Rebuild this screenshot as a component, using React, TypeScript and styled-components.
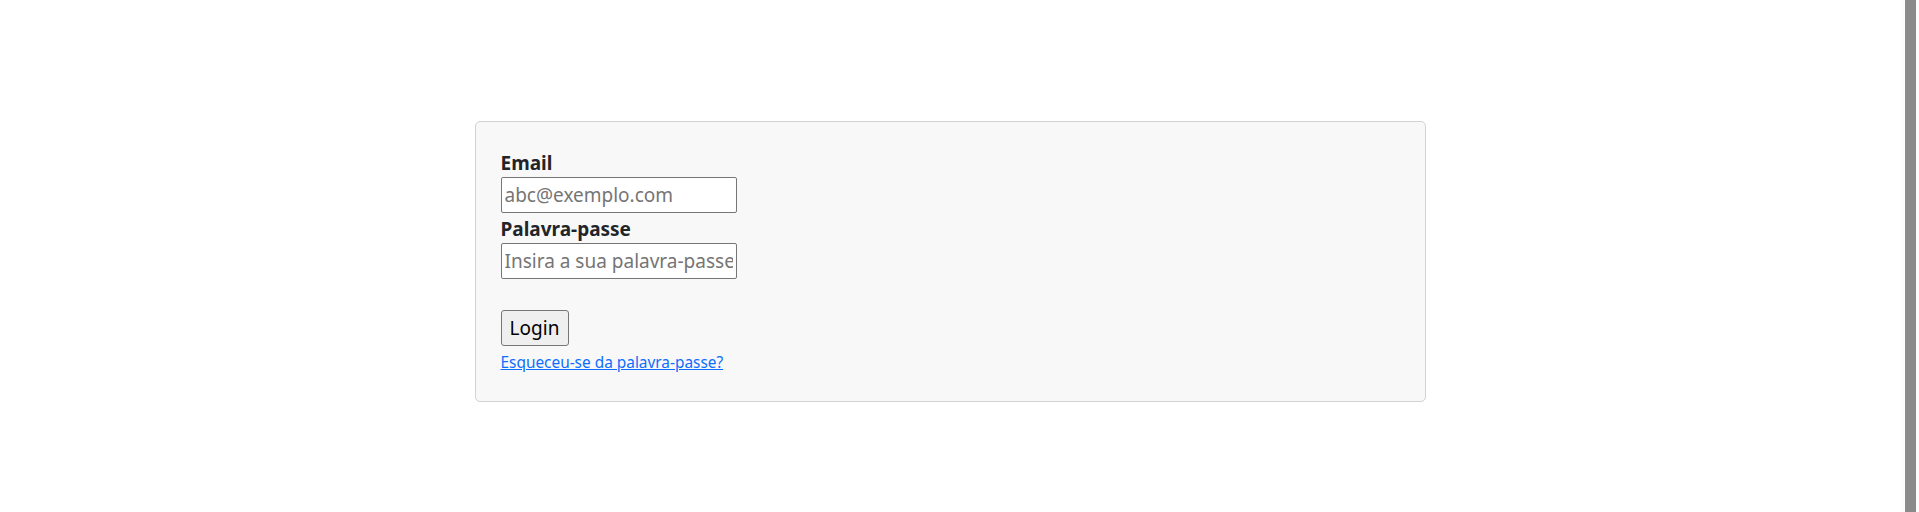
import React from "react";
import styled, { createGlobalStyle } from "styled-components";

const Global = createGlobalStyle`
  html, body { margin: 0; padding: 0; background: #ffffff; }
  body { font-family: "Noto Sans", "Open Sans", Arial, sans-serif; color: #212529; }
`;

const Page = styled.div`
  display: flex;
  justify-content: center;
  align-items: flex-start;
  padding: 121px 19px 0 0;
  min-height: 512px;
  box-sizing: border-box;
`;

const Card = styled.form`
  width: 951px;
  box-sizing: border-box;
  background: #f8f8f8;
  border: 1px solid #d2d2d2;
  border-radius: 5px;
  padding: 25px 25px 26px;
  display: flex;
  flex-direction: column;
  align-items: flex-start;
`;

const Label = styled.label`
  display: block;
  font-weight: 700;
  font-size: 19px;
  line-height: 30px;
  padding-top: 1px;
  height: 30px;
  box-sizing: border-box;
  color: #212529;
`;

const Input = styled.input`
  width: 236px;
  height: 36px;
  box-sizing: border-box;
  border: 1px solid #767676;
  border-radius: 2px;
  padding: 0 3px;
  font-family: "Noto Sans", Arial, sans-serif;
  font-size: 19px;
  color: #212529;
  background: #ffffff;
  margin: 0;
  &::placeholder { color: #757575; }
`;

const Button = styled.button`
  margin-top: 31px;
  height: 36px;
  width: 68px;
  box-sizing: border-box;
  padding: 0;
  background: #efefef;
  border: 1px solid #767676;
  border-radius: 3px;
  font-family: "Noto Sans", Arial, sans-serif;
  font-size: 19px;
  color: #000000;
`;

const Link = styled.a`
  margin-top: 5px;
  font-size: 15.4px;
  line-height: 24px;
  color: #0d6efd;
  text-decoration: underline;
`;

const Track = styled.div`
  position: fixed;
  top: 0;
  right: 0;
  width: 18px;
  height: 100%;
  background: #fcfcfc;
`;

const Thumb = styled.div`
  position: absolute;
  top: 0;
  left: 4px;
  width: 11px;
  height: 100%;
  background: #8a8a8a;
`;

export default function App() {
  return (
    <>
      <Global />
      <Page>
        <Card onSubmit={(e) => e.preventDefault()}>
          <Label htmlFor="email">Email</Label>
          <Input id="email" type="email" placeholder="abc@exemplo.com" />
          <Label htmlFor="pw">Palavra-passe</Label>
          <Input id="pw" type="password" placeholder="Insira a sua palavra-passe" />
          <Button type="submit">Login</Button>
          <Link href="#">Esqueceu-se da palavra-passe?</Link>
        </Card>
      </Page>
      <Track>
        <Thumb />
      </Track>
    </>
  );
}
